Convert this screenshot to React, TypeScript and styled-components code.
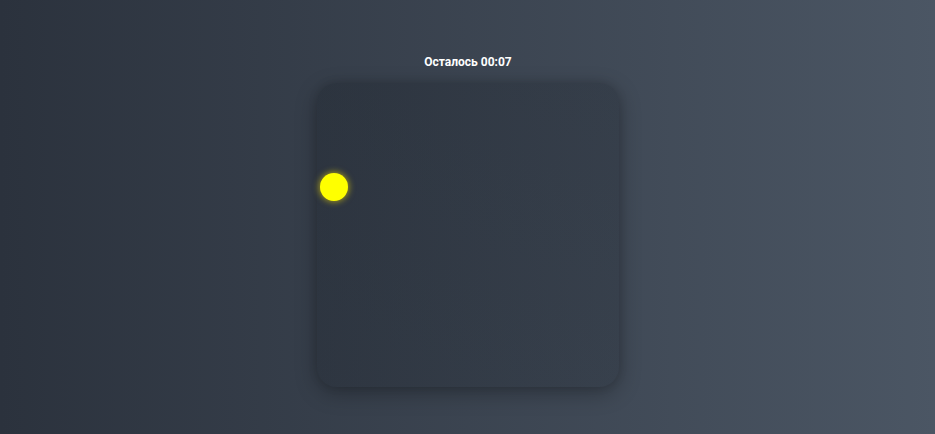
import React from 'react';
import styled, { createGlobalStyle } from 'styled-components';

const GlobalStyle = createGlobalStyle`
  html, body {
    margin: 0;
    padding: 0;
    height: 100%;
  }
  body {
    font-family: Roboto, "Liberation Sans", Arial, sans-serif;
    background: linear-gradient(to right, #2b323d 0%, #4b5664 100%);
    color: #fff;
  }
  #root {
    min-height: 100%;
  }
`;

const Page = styled.div`
  width: 100%;
  height: 100vh;
  display: flex;
  flex-direction: column;
  align-items: center;
  padding-top: 55px;
  box-sizing: border-box;
`;

const Timer = styled.div`
  font-size: 12px;
  font-weight: 700;
  line-height: 14px;
  color: #ffffff;
  margin-bottom: 14px;
  margin-left: 1px;
`;

const Board = styled.div`
  position: relative;
  width: 302px;
  height: 304px;
  border-radius: 20px;
  background: linear-gradient(135deg, rgba(22, 28, 36, 0.3), rgba(22, 28, 36, 0.2));
  box-shadow: 0 6px 22px rgba(0, 0, 0, 0.28), 0 0 10px rgba(0, 0, 0, 0.12);
`;

const Ball = styled.div<{ $x: number; $y: number; $size: number }>`
  position: absolute;
  left: ${p => p.$x}px;
  top: ${p => p.$y}px;
  width: ${p => p.$size}px;
  height: ${p => p.$size}px;
  border-radius: 50%;
  background: #ffff00;
  box-shadow: 0 0 6px 1px rgba(255, 230, 0, 0.55);
`;

export default function App() {
  return (
    <>
      <GlobalStyle />
      <Page>
        <Timer>Осталось 00:07</Timer>
        <Board>
          <Ball $x={3} $y={90} $size={28} />
        </Board>
      </Page>
    </>
  );
}
